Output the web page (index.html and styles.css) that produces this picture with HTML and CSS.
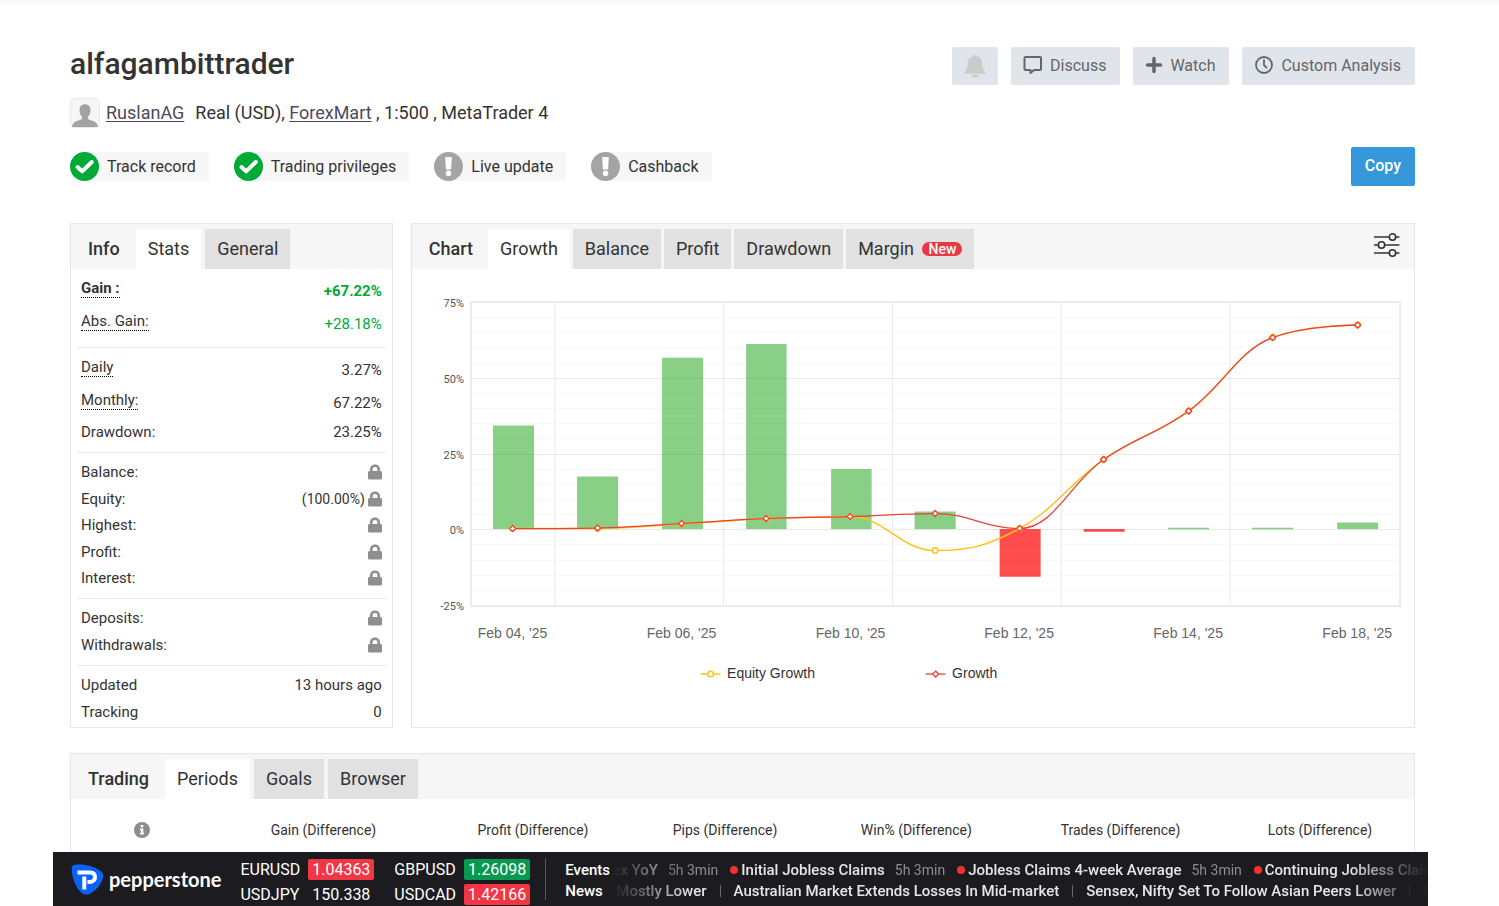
FILE: index.html
```html
<!DOCTYPE html>
<html lang="en">
<head>
<meta charset="utf-8">
<title>alfagambittrader</title>
<link rel="stylesheet" href="styles.css">
</head>
<body>
<svg class="sprite" aria-hidden="true">
  <symbol id="lock" viewBox="0 0 14 16"><path fill="#8f8f8f" d="M2 7V5.200C2 2.200 4.200 0.500 7 0.500S12 2.200 12 5.200V7h.5C13.300 7 14 7.700 14 8.500v5.500c0 .9-.7 1.500-1.500 1.500h-11C.7 15.500 0 14.900 0 14V8.500C0 7.700.7 7 1.500 7zm2.600 0h4.800V5.200C9.400 3.700 8.300 2.900 7 2.900S4.600 3.700 4.600 5.200z"/></symbol>
  <symbol id="check" viewBox="0 0 29 29"><circle cx="14.500" cy="14.500" r="14.500" fill="#00aa37"/><path d="M7.500 15l4.700 4.400L21.800 10" fill="none" stroke="#fff" stroke-width="4" stroke-linecap="round" stroke-linejoin="round"/></symbol>
  <symbol id="alert" viewBox="0 0 29 29"><circle cx="14.500" cy="14.500" r="14.500" fill="#a4a4a4"/><path d="M11.200 5h6.600l-.7 12.500h-5.200z" fill="#fff"/><circle cx="14.500" cy="21.200" r="2.800" fill="#fff"/></symbol>
</svg>

<main class="page">
  <header class="account">
    <div class="account-top">
      <h1 class="account-name">alfagambittrader</h1>
      <div class="actions">
        <button class="action bell" type="button" aria-label="Notifications" disabled>
          <svg width="22" height="24" viewBox="0 0 22 24" fill="#cbcbcb"><path d="M9.500 2.200a1.500 1.500 0 0 1 3 0c3.800.7 5.800 3.500 5.900 7.300.1 4 .7 6.200 2.500 8 .9 1 .4 2.200-.8 2.200H1.900c-1.200 0-1.700-1.200-.8-2.200 1.800-1.800 2.400-4 2.500-8 .1-3.800 2.100-6.600 5.900-7.300z"/><path d="M7.500 21h7c-.4 1.800-1.700 2.800-3.500 2.800S7.900 22.800 7.500 21z"/></svg>
        </button>
        <button class="action" type="button">
          <svg width="20" height="20" viewBox="0 0 20 20" fill="none" stroke="#666" stroke-width="2" stroke-linejoin="round"><path d="M2.500 2h14.500c.6 0 1 .4 1 1v11c0 .6-.4 1-1 1h-6l-3.500 3V15h-5c-.6 0-1-.4-1-1V3c0-.6.4-1 1-1z"/></svg>
          Discuss
        </button>
        <button class="action" type="button">
          <svg width="18" height="18" viewBox="0 0 18 18" fill="none" stroke="#666" stroke-width="3.500" stroke-linecap="round"><path d="M9 2.500v13M2.500 9h13"/></svg>
          Watch
        </button>
        <button class="action" type="button">
          <svg width="20" height="20" viewBox="0 0 20 20" fill="none" stroke="#666" stroke-width="1.800" stroke-linecap="round"><circle cx="10" cy="10" r="8"/><path d="M10 5.200v5l2.500 2.500"/></svg>
          Custom Analysis
        </button>
      </div>
    </div>
    <div class="account-meta">
      <svg class="avatar" width="30" height="30" viewBox="0 0 30 30"><rect x=".5" y=".5" width="29" height="29" rx="4" fill="#f6f6f6" stroke="#e6eaf0"/><path fill="#a3a3a3" d="M15 6.300c3.400 0 5.500 2.200 5.500 5.700 0 3-1 5.300-2.500 6.500-.4 1.700.1 2.700 1.400 3.200 3.700 1.200 8 2 8.600 7.300H2c.6-5.300 4.900-6.100 8.600-7.300 1.300-.5 1.800-1.500 1.400-3.200C10.500 17.300 9.500 15 9.500 12c0-3.500 2.100-5.700 5.500-5.700z"/></svg>
      <a class="meta-link user" href="#">RuslanAG</a>
      <span>Real (USD), <a class="meta-link" href="#">ForexMart</a> , 1:500 , MetaTrader 4</span>
    </div>
    <div class="account-bottom">
      <ul class="badges">
        <li class="badge"><svg width="29" height="29"><use href="#check"/></svg><span>Track record</span></li>
        <li class="badge"><svg width="29" height="29"><use href="#check"/></svg><span>Trading privileges</span></li>
        <li class="badge"><svg width="29" height="29"><use href="#alert"/></svg><span>Live update</span></li>
        <li class="badge"><svg width="29" height="29"><use href="#alert"/></svg><span>Cashback</span></li>
      </ul>
      <button class="copy" type="button">Copy</button>
    </div>
  </header>

  <div class="columns">
    <section class="panel">
      <div class="tabs">
        <h2 class="tabs-title">Info</h2>
        <button class="tab active" type="button">Stats</button>
        <button class="tab" type="button">General</button>
      </div>
      <div class="stats">
        <dl class="group">
          <div class="row tall strong"><dt><span class="hint">Gain :</span></dt><dd class="up">+67.22%</dd></div>
          <div class="row tall"><dt><span class="hint">Abs. Gain:</span></dt><dd class="up">+28.18%</dd></div>
        </dl>
        <dl class="group">
          <div class="row tall"><dt><span class="hint">Daily</span></dt><dd>3.27%</dd></div>
          <div class="row tall"><dt><span class="hint">Monthly:</span></dt><dd>67.22%</dd></div>
          <div class="row"><dt>Drawdown:</dt><dd>23.25%</dd></div>
        </dl>
        <dl class="group spaced">
          <div class="row"><dt>Balance:</dt><dd><svg class="lock" role="img" aria-label="Private"><use href="#lock"/></svg></dd></div>
          <div class="row"><dt>Equity:</dt><dd><small class="share">(100.00%)</small><svg class="lock" role="img" aria-label="Private"><use href="#lock"/></svg></dd></div>
          <div class="row"><dt>Highest:</dt><dd><svg class="lock" role="img" aria-label="Private"><use href="#lock"/></svg></dd></div>
          <div class="row"><dt>Profit:</dt><dd><svg class="lock" role="img" aria-label="Private"><use href="#lock"/></svg></dd></div>
          <div class="row"><dt>Interest:</dt><dd><svg class="lock" role="img" aria-label="Private"><use href="#lock"/></svg></dd></div>
        </dl>
        <dl class="group spaced">
          <div class="row"><dt>Deposits:</dt><dd><svg class="lock" role="img" aria-label="Private"><use href="#lock"/></svg></dd></div>
          <div class="row"><dt>Withdrawals:</dt><dd><svg class="lock" role="img" aria-label="Private"><use href="#lock"/></svg></dd></div>
        </dl>
        <dl class="group spaced">
          <div class="row"><dt>Updated</dt><dd>13 hours ago</dd></div>
          <div class="row"><dt>Tracking</dt><dd>0</dd></div>
        </dl>
      </div>
    </section>

    <section class="panel">
      <div class="tabs tight">
        <h2 class="tabs-title">Chart</h2>
        <button class="tab active" type="button">Growth</button>
        <button class="tab" type="button">Balance</button>
        <button class="tab" type="button">Profit</button>
        <button class="tab" type="button">Drawdown</button>
        <button class="tab" type="button">Margin <span class="new">New</span></button>
        <button class="settings" type="button" aria-label="Chart options">
          <svg width="26" height="24" viewBox="0 0 26 24" fill="none" stroke="#333" stroke-width="1.600"><path d="M0 4h15M22 4h3.500M0 12h4M11 12h14.500M0 20h15M22 20h3.500"/><circle cx="18.500" cy="4" r="3.200"/><circle cx="7.500" cy="12" r="3.200"/><circle cx="18.500" cy="20" r="3.200"/></svg>
        </button>
      </div>
      <svg class="chart" viewBox="412 269 1002 458" role="img" aria-label="Growth chart">
        <path class="minor" d="M471 317.500H1400M471 332.500H1400M471 347.500H1400M471 363.500H1400M471 393.500H1400M471 408.500H1400M471 423.500H1400M471 438.500H1400M471 469.500H1400M471 484.500H1400M471 499.500H1400M471 514.500H1400M471 544.500H1400M471 560.500H1400M471 575.500H1400M471 590.500H1400"/>
        <path class="major" d="M471 378.500H1400M471 454.500H1400M471 529.500H1400M555 302V606M723.500 302V606M892.500 302V606M1061 302V606M1230 302V606"/>
        <rect class="frame" x="471" y="302" width="929" height="304"/>
        <g class="gain">
          <rect x="493" y="425.500" width="41" height="103.500"/>
          <rect x="577" y="476.500" width="41" height="52.500"/>
          <rect x="662" y="357.700" width="41" height="171.300"/>
          <rect x="746" y="344" width="40.500" height="185"/>
          <rect x="831" y="469" width="40.500" height="60"/>
          <rect x="914.500" y="511.500" width="41" height="17.500"/>
          <rect x="1168" y="527.700" width="41" height="1.500"/>
          <rect x="1252" y="527.700" width="41" height="1.500"/>
          <rect x="1337" y="522.500" width="41" height="6.500"/>
        </g>
        <g class="loss">
          <rect x="999.500" y="529" width="41" height="47.700"/>
          <rect x="1083.500" y="529" width="41" height="2.700"/>
        </g>
        <g class="equity">
          <path d="M512.500 528.500C512.500 528.500 563.500 528.500 597.500 528.500S647.500 525.900 681.500 524S732 519.900 766 518.500S816 516.500 850 516.500C884 516.500 901 550.500 935 550.500C969 550.500 985.500 546.700 1019.500 528.500S1069.500 483 1103.500 459.500S1154.500 435.400 1188.500 411S1238.500 350 1272.500 337.500C1306.500 325 1357.500 325 1357.500 325"/>
          <circle cx="512.500" cy="528.500" r="2.700"/><circle cx="597.500" cy="528.500" r="2.700"/><circle cx="681.500" cy="524" r="2.700"/><circle cx="766.500" cy="518.500" r="2.700"/><circle cx="850" cy="516.500" r="2.700"/><circle cx="935" cy="550.500" r="2.700"/><circle cx="1019.500" cy="528.500" r="2.700"/><circle cx="1103.500" cy="459.500" r="2.700"/><circle cx="1188.500" cy="411" r="2.700"/><circle cx="1272.500" cy="337.500" r="2.700"/><circle cx="1357.500" cy="325" r="2.700"/>
        </g>
        <g class="growth">
          <path d="M512.500 528.500C512.500 528.500 563.500 528.500 597.500 528S647.500 525.400 681.500 523.500S732 519.900 766 518.500S816 517.500 850 516.500S901 513.500 935 513.500C969 513.500 985.500 528.500 1019.500 528.500C1053.500 528.500 1069.500 483 1103.500 459.500S1154.500 435.400 1188.500 411S1238.500 350 1272.500 337.500C1306.500 325 1357.500 325 1357.500 325"/>
          <path class="mark" d="M512.500 525.500l3 3l-3 3l-3-3zM597.500 525l3 3l-3 3l-3-3zM681.500 520.500l3 3l-3 3l-3-3zM766 515.500l3 3l-3 3l-3-3zM850 513.500l3 3l-3 3l-3-3zM935 510.500l3 3l-3 3l-3-3zM1019.500 525.500l3 3l-3 3l-3-3zM1103.500 456.500l3 3l-3 3l-3-3zM1188.500 408l3 3l-3 3l-3-3zM1272.500 334.500l3 3l-3 3l-3-3zM1357.500 322l3 3l-3 3l-3-3z"/>
        </g>
        <g class="y-labels">
          <text x="464" y="307">75%</text><text x="464" y="383">50%</text><text x="464" y="459">25%</text><text x="464" y="534">0%</text><text x="464" y="610">-25%</text>
        </g>
        <g class="x-labels">
          <text x="512.500" y="638">Feb 04, '25</text><text x="681.500" y="638">Feb 06, '25</text><text x="850.500" y="638">Feb 10, '25</text><text x="1019" y="638">Feb 12, '25</text><text x="1188" y="638">Feb 14, '25</text><text x="1357" y="638">Feb 18, '25</text>
        </g>
        <g class="equity"><path class="key" d="M700.500 674h20"/><circle cx="710.500" cy="674" r="2.800"/></g>
        <text class="legend" x="727" y="678">Equity Growth</text>
        <g class="growth"><path class="key" d="M925.500 674h20"/><path class="mark" d="M935.500 671l3 3l-3 3l-3-3z"/></g>
        <text class="legend" x="952" y="678">Growth</text>
      </svg>
    </section>
  </div>

  <section class="panel">
    <div class="tabs">
      <h2 class="tabs-title">Trading</h2>
      <button class="tab active" type="button">Periods</button>
      <button class="tab" type="button">Goals</button>
      <button class="tab" type="button">Browser</button>
    </div>
    <table class="periods">
      <colgroup><col class="c-info"><col class="c-gain"><col class="c-profit"><col class="c-pips"><col class="c-win"><col class="c-trades"><col class="c-lots"></colgroup>
      <thead>
        <tr>
          <th scope="col"><svg class="info" width="16" height="16" viewBox="0 0 16 16" role="img" aria-label="Information"><circle cx="8" cy="8" r="8" fill="#8c8c8c"/><path fill="#fff" d="M6.700 3h2.600v2.200H6.700zM6 6.500h3.300v4.300h.8v1.700H6v-1.700h.8V8.200H6z"/></svg></th>
          <th scope="col">Gain (Difference)</th>
          <th scope="col">Profit (Difference)</th>
          <th scope="col">Pips (Difference)</th>
          <th scope="col">Win% (Difference)</th>
          <th scope="col">Trades (Difference)</th>
          <th scope="col">Lots (Difference)</th>
        </tr>
      </thead>
    </table>
  </section>
</main>

<footer class="ticker">
  <a class="brand" href="#">
    <svg width="33" height="31" viewBox="0 0 33 31"><path fill="#0a62fb" d="M4 .8C12-.4 22 1.800 29 6.500c3 2 4 4.500 3 7.500-2 6.500-6.500 12-12.500 15.500-3 1.800-6 1.600-8.500-.4C5 24.500.8 14 .7 4.500.7 2.300 1.800 1.100 4 .8z"/><path fill="none" stroke="#fff" stroke-width="4" d="M6.500 8.500H19c3.300 0 5 1.800 5 4.500s-1.700 5-5 5h-2.500M13.300 12.500V25.500"/></svg>
    <span>pepperstone</span>
  </a>
  <dl class="quotes">
    <dt>EURUSD</dt><dd class="red">1.04363</dd>
    <dt>GBPUSD</dt><dd class="green">1.26098</dd>
    <dt>USDJPY</dt><dd>150.338</dd>
    <dt>USDCAD</dt><dd class="red">1.42166</dd>
  </dl>
  <div class="feeds">
    <div class="feed">
      <h3 class="feed-title">Events</h3>
      <div class="feed-track">
        <a href="#">ex YoY</a><time>5h 3min</time>
        <i class="dot"></i><a href="#">Initial Jobless Claims</a><time>5h 3min</time>
        <i class="dot"></i><a href="#">Jobless Claims 4-week Average</a><time>5h 3min</time>
        <i class="dot"></i><a href="#">Continuing Jobless Claims</a>
      </div>
    </div>
    <div class="feed">
      <h3 class="feed-title">News</h3>
      <div class="feed-track headlines">
        <a href="#">Mostly Lower</a><i class="bar"></i>
        <a href="#">Australian Market Extends Losses In Mid-market</a><i class="bar"></i>
        <a href="#">Sensex, Nifty Set To Follow Asian Peers Lower</a><i class="bar"></i>
        <a href="#">N</a>
      </div>
    </div>
  </div>
</footer>
</body>
</html>
```
FILE: styles.css
```css
* {
  box-sizing: border-box;
}

body {
  margin: 0;
  font-family: Roboto, "Liberation Sans", sans-serif;
  font-size: 15px;
  color: #333;
  background: linear-gradient(#f7f7f7, #fff 8px) no-repeat #fff;
}

h1, h2, h3, ul, dl, dd {
  margin: 0;
  padding: 0;
}

button {
  font: inherit;
  color: inherit;
  border: 0;
  cursor: pointer;
}

svg {
  flex: none;
}

.sprite {
  position: absolute;
  width: 0;
  height: 0;
}

.page {
  padding: 47px 84px 0 70px;
}

/* Account header */
.account {
  margin-bottom: 37px;
}

.account-top,
.account-bottom {
  display: flex;
  justify-content: space-between;
  align-items: flex-start;
}

.account-bottom {
  align-items: center;
}

.account-name {
  font-size: 30px;
  line-height: 34px;
  font-weight: 500;
}

.actions {
  display: flex;
  gap: 13px;
}

.action {
  display: flex;
  align-items: center;
  gap: 7px;
  height: 38px;
  padding: 0 14px 2px 12px;
  border-radius: 2px;
  background: #e0e5ec;
  font-size: 16px;
  color: #666;
}

.bell {
  padding: 0 12px;
}

.account-meta {
  display: flex;
  align-items: center;
  height: 30px;
  margin: 13px 0 19px;
  font-size: 18px;
  line-height: 20px;
}

.meta-link {
  color: #4d4960;
  text-underline-offset: 2px;
}

.user {
  margin: 0 11px 0 6px;
}

.badges {
  display: flex;
  gap: 25px;
  list-style: none;
}

.badge {
  display: flex;
  align-items: center;
  gap: 8px;
  height: 29px;
  padding-right: 13px;
  border-radius: 15px 2px 2px 15px;
  background: #f7f7f7;
  font-size: 16px;
}

.copy {
  height: 39px;
  padding: 0 14px 2px;
  border-radius: 2px;
  background: #3498db;
  color: #fff;
  font-size: 16px;
  font-weight: 500;
}

/* Panels and tabs */
.columns {
  display: grid;
  grid-template-columns: 24% minmax(0, 1fr);
  gap: 18px;
  margin-bottom: 25px;
}

.panel {
  border: 1px solid #e6e6e6;
  background: #fff;
}

.tabs {
  display: flex;
  align-items: stretch;
  gap: 4px;
  height: 45px;
  padding: 5px 14px 0 17px;
  background: #f6f6f6;
  font-size: 18px;
}

.tight {
  gap: 3px;
}

.tabs-title {
  margin-right: 12px;
  font-size: 18px;
  line-height: 40px;
  font-weight: 500;
}

.tab {
  padding: 0 12px 2px;
  background: #e1e1e1;
}

.tab.active {
  background: #fff;
}

.new {
  display: inline-block;
  margin-left: 4px;
  padding: 0 6px;
  border-radius: 7px;
  background: #e63946;
  color: #fff;
  font-size: 14px;
  line-height: 14px;
  font-weight: 500;
  vertical-align: 1px;
}

.settings {
  margin-left: auto;
  padding: 0 0 4px;
  background: none;
}

/* Stats list */
.stats {
  padding: 0 6px;
}

.group {
  padding: 5px 4px 7px;
}

.group + .group {
  border-top: 1px solid #eaeaea;
}

.group.spaced {
  padding-top: 6px;
}

.group:last-child {
  padding-bottom: 0;
}

.row {
  display: flex;
  justify-content: space-between;
  align-items: center;
  height: 26px;
}

.tall {
  height: 33px;
}

.spaced .row:nth-child(even) {
  margin-top: 1px;
}

.row dd {
  display: flex;
  align-items: center;
  gap: 3px;
}

.strong {
  font-weight: 700;
}

.hint {
  display: block;
  margin-bottom: 4px;
  border-bottom: 1px dotted #000;
}

.up {
  color: #00aa37;
}

.share {
  font-size: 14px;
}

.lock {
  width: 14px;
  height: 16px;
}

/* Chart */
.chart {
  display: block;
  width: 100%;
  font-family: "Liberation Sans", Arial, sans-serif;
}

.minor {
  stroke: #f8f8f8;
}

.major {
  stroke: #e8e8e8;
}

.frame {
  fill: none;
  stroke: #ebebeb;
  stroke-width: 2;
}

.gain {
  fill: #13a10e;
  fill-opacity: 0.5;
}

.loss {
  fill: #ff0f0f;
  fill-opacity: 0.74;
}

.equity {
  fill: none;
  stroke: #fbc21b;
  stroke-width: 1.5;
}

.growth {
  fill: none;
  stroke: #e8433a;
  stroke-width: 1.3;
}

.equity circle,
.growth .mark {
  fill: #fff;
}

.y-labels {
  fill: #555;
  font-family: Roboto, sans-serif;
  font-size: 11px;
  text-anchor: end;
}

.x-labels {
  fill: #666;
  font-size: 14px;
  text-anchor: middle;
}

.legend {
  fill: #333;
  font-size: 14px;
}

/* Periods table */
.periods {
  width: 100%;
  table-layout: fixed;
  border-collapse: collapse;
}

.periods th {
  height: 53px;
  padding: 9px 0 0;
  border-bottom: 1px solid #e6e6e6;
  font-size: 14px;
  font-weight: 400;
}

.info {
  vertical-align: middle;
}

.c-info { width: 10.6%; }
.c-gain { width: 16.4%; }
.c-profit { width: 14.8%; }
.c-pips { width: 13.8%; }
.c-win { width: 14.7%; }
.c-trades { width: 15.7%; }
.c-lots { width: 14%; }

/* Market ticker */
.ticker {
  position: fixed;
  left: 53px;
  right: 71px;
  bottom: 0;
  display: flex;
  align-items: center;
  height: 54px;
  padding-left: 18px;
  background: #1c1b20;
  color: #fff;
}

.ticker a {
  color: inherit;
  text-decoration: none;
}

.brand {
  display: flex;
  align-items: center;
  gap: 5px;
  margin-right: 19px;
  font-family: Lato, sans-serif;
  font-size: 20px;
  font-weight: 700;
}

.quotes {
  display: grid;
  grid-template-columns: auto auto auto auto;
  align-items: center;
  gap: 4px 8px;
  padding-top: 6px;
  font-size: 16px;
  line-height: 20px;
}

.quotes dd {
  padding: 1px 4px 0;
  border-radius: 2px;
  line-height: 20px;
}

.quotes dd:nth-of-type(odd) {
  margin-right: 12px;
}

.red {
  background: #f23645;
}

.green {
  background: #089950;
}

.feeds {
  flex: 1;
  min-width: 0;
  margin-left: 15px;
  padding-left: 19px;
  border-left: 1px solid #55555b;
}

.feed {
  display: flex;
  align-items: center;
  height: 21px;
  padding-top: 3px;
}

.feed-title {
  flex: none;
  width: 47px;
  font-size: 15px;
  font-weight: 500;
}

.feed-track {
  display: flex;
  align-items: center;
  flex: 1;
  overflow: hidden;
  white-space: nowrap;
  font-weight: 500;
  color: #e6e6e6;
  -webkit-mask-image: linear-gradient(90deg, transparent, #000 80px, #000 calc(100% - 80px), transparent);
  mask-image: linear-gradient(90deg, transparent, #000 80px, #000 calc(100% - 80px), transparent);
}

.headlines {
  padding-left: 4px;
}

.feed-track time {
  margin: 0 12px 0 10px;
  font-size: 14px;
  font-weight: 400;
  color: #8e8e92;
}

.dot {
  flex: none;
  width: 8px;
  height: 8px;
  margin-right: 3px;
  border-radius: 50%;
  background: #f23030;
}

.bar {
  flex: none;
  width: 1px;
  height: 12px;
  margin: 0 13px;
  background: #66666b;
}
```
